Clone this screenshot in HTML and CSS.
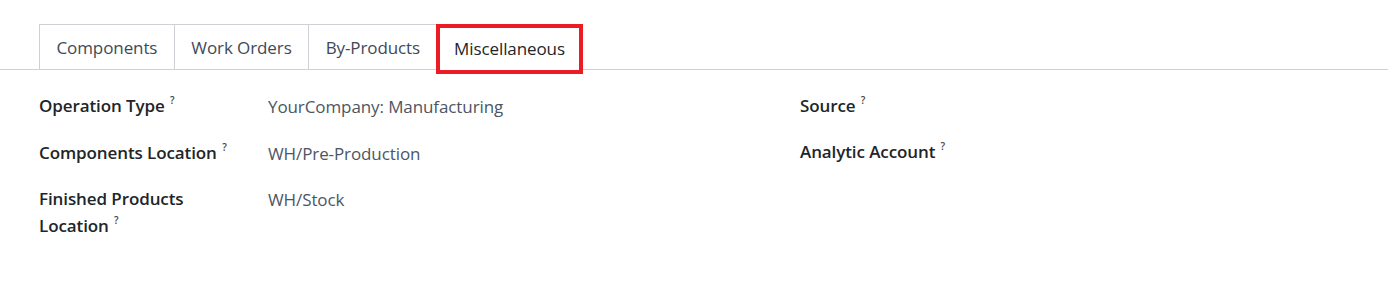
FILE: index.html
```html
<!DOCTYPE html>
<html>
<head>
<meta charset="utf-8">
<link rel="stylesheet" href="styles.css">
</head>
<body>
<div class="page">
  <div class="tabs">
    <div class="tab">Components</div>
    <div class="tab">Work Orders</div>
    <div class="tab">By-Products</div>
    <div class="tab tab-active">Miscellaneous</div>
  </div>
  <div class="content">
    <div class="group">
      <div class="row">
        <div class="label">Operation Type <sup>?</sup></div>
        <div class="value">YourCompany: Manufacturing</div>
      </div>
      <div class="row">
        <div class="label">Components Location <sup>?</sup></div>
        <div class="value">WH/Pre-Production</div>
      </div>
      <div class="row">
        <div class="label narrow">Finished Products Location <sup>?</sup></div>
        <div class="value">WH/Stock</div>
      </div>
    </div>
    <div class="group right">
      <div class="row">
        <div class="label">Source <sup>?</sup></div>
        <div class="value"></div>
      </div>
      <div class="row">
        <div class="label">Analytic Account <sup>?</sup></div>
        <div class="value"></div>
      </div>
    </div>
  </div>
</div>
</body>
</html>
```
FILE: styles.css
```css
html, body {
  margin: 0;
  padding: 0;
  background: #ffffff;
}
body {
  font-family: "Open Sans", "Noto Sans", sans-serif;
  font-size: 17px;
  color: #212529;
}
.page {
  padding-top: 24px;
}
.tabs {
  display: flex;
  padding-left: 39px;
  border-bottom: 1px solid #d0d0d6;
  height: 45px;
}
.tab {
  position: relative;
  border: 1px solid #d0d0d6;
  border-bottom: none;
  margin-left: -1px;
  padding: 0 16.5px;
  height: 45px;
  display: flex;
  align-items: center;
  color: #3e4a57;
  font-size: 17px;
  letter-spacing: -0.1px;
}
.tab:first-child {
  margin-left: 0;
}
.tab-active {
  color: #212529;
  border-color: transparent;
  background: #fff;
  height: 46px;
}
.tab-active::after {
  content: "";
  position: absolute;
  left: -2px;
  right: -2px;
  top: -1px;
  bottom: -3px;
  border: 4px solid #ec1c24;
}
.content {
  display: flex;
  padding: 22px 39px 0 39px;
}
.group {
  width: 761px;
}
.group.right {
  width: auto;
}
.row {
  display: flex;
  margin-bottom: 18.5px;
}
.label {
  width: 229px;
  font-weight: 600;
  line-height: 27px;
  letter-spacing: -0.1px;
  color: #212529;
}
.label.narrow {
  width: 170px;
  margin-right: 59px;
}
.label sup {
  font-size: 10px;
  line-height: 1;
  font-weight: 600;
  vertical-align: top;
  position: relative;
  top: 3px;
  color: #444;
  margin-left: 1px;
}
.value {
  line-height: 27px;
  color: #4c5663;
  letter-spacing: -0.1px;
  padding-top: 1px;
}
```
